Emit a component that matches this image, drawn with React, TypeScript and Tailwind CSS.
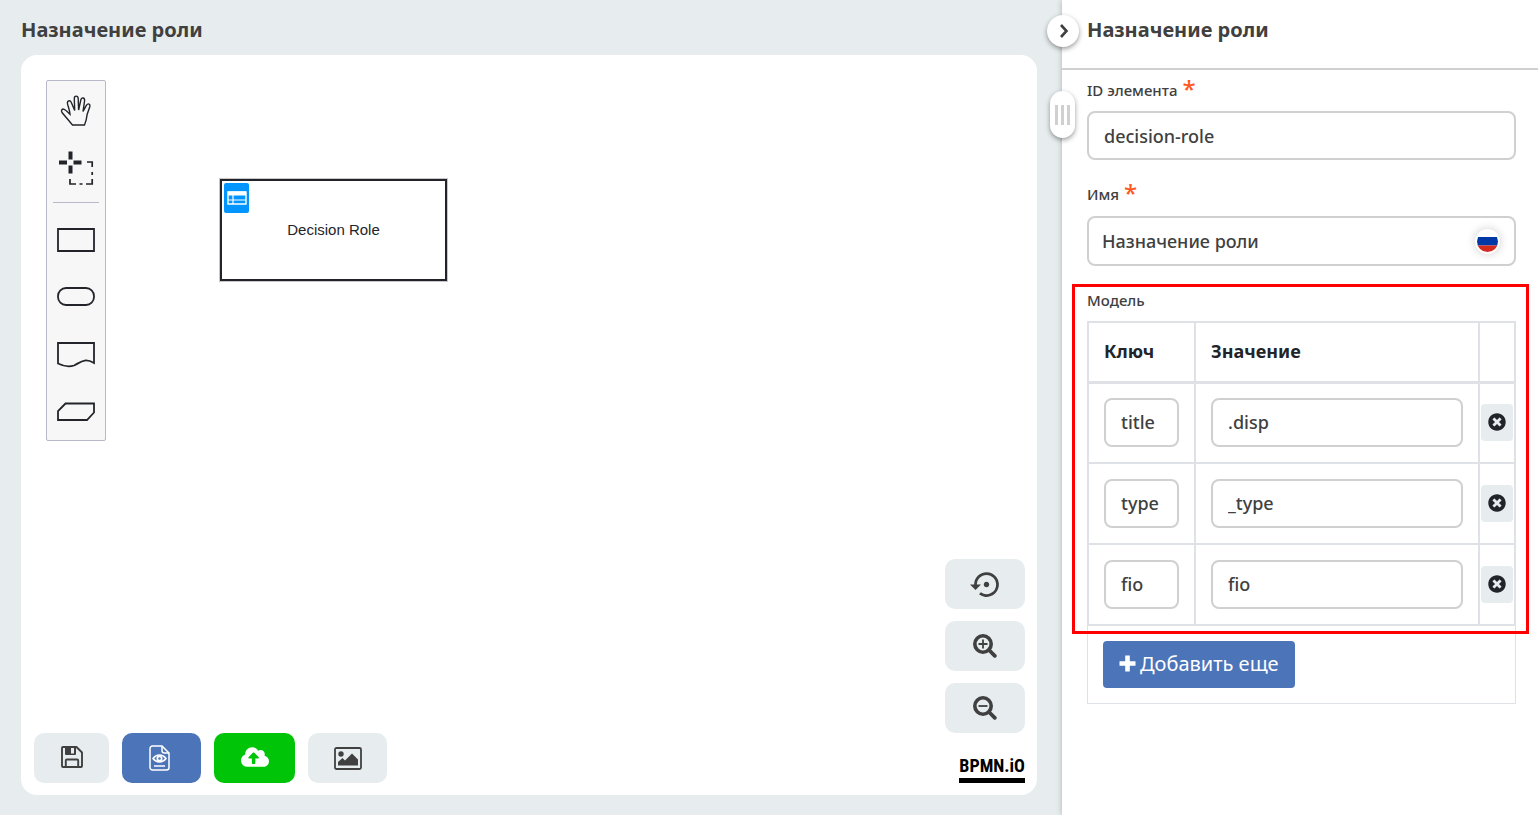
import { useState } from "react";
import type { ReactNode } from "react";
import { FaCloudUploadAlt, FaTimesCircle } from "react-icons/fa";
import { MdSettingsBackupRestore } from "react-icons/md";

const paletteTools: { label: string; icon: ReactNode }[] = [
  {
    label: "Рука",
    icon: (
      <path d="M15.500 34L5 21.500C3.700 19.300 5.200 17.400 7.200 18.300C9 19.200 11 21.200 13 23.200C12.700 19.500 11.300 16 10.500 12.800C9.900 9.500 13 8.700 14.200 11.200L17.700 19.500L17.300 7.500C17.300 4.300 21 4.300 21.200 7.500L21.600 19L23.800 9C24.400 6 27.800 6.600 27.600 9.600L26 20.500L29.500 14.200C31.100 11.800 33.600 13 32.800 15.700L30.200 23.200C29.700 27.500 28.800 31 27.500 34Z" strokeWidth="1.400" />
    ),
  },
  {
    label: "Выделение",
    icon: (
      <>
        <path d="M13.500 3.500v8M13.500 17.500v8M2 14.500h8M16.500 14.500h8" strokeWidth="4" />
        <path d="M30 14h5.200v5M35.200 24v3M35.200 31v5H29M25.500 36h-3M19 36h-6V31" strokeWidth="1.700" />
      </>
    ),
  },
];

const shapeTools: { label: string; path: string }[] = [
  { label: "Решение", path: "M1 9h36v22H1z" },
  { label: "Входные данные", path: "M9 11h20a8 8 0 0 1 8 8v1a8 8 0 0 1-8 8H9a8 8 0 0 1-8-8v-1a8 8 0 0 1 8-8z" },
  { label: "Источник знаний", path: "M1 9h36v20C27 23 23 29 17 31.500C11 33.500 6 32 1 29.500z" },
  { label: "Модель знаний", path: "M8.500 12.500H37v9L30 29H1v-9z" },
];

function PaletteButton({ label, children }: { label: string; children: ReactNode }) {
  return (
    <button type="button" aria-label={label} className="flex h-[57px] w-full items-center justify-center">
      <svg width="38" height="40" viewBox="0 0 38 40" fill="none" stroke="#22242a" strokeWidth="1.800">
        {children}
      </svg>
    </button>
  );
}

function ZoomIcon({ plus }: { plus?: boolean }) {
  return (
    <svg width="24" height="24" viewBox="0 0 24 24" fill="none" stroke="#404040">
      <circle cx="10" cy="10" r="8.200" strokeWidth="3.600" />
      <path d="M16 16l5.800 5.800" strokeWidth="3.800" strokeLinecap="round" />
      <path d={plus ? "M5.500 10h9M10 5.500v9" : "M5.500 10h9"} strokeWidth="1.800" />
    </svg>
  );
}

function SaveIcon() {
  return (
    <svg width="22" height="22" viewBox="0 0 22 22" fill="none" stroke="#404040" strokeWidth="1.900">
      <path d="M1 2a1 1 0 0 1 1-1h13.500L21 6.500V20a1 1 0 0 1-1 1H2a1 1 0 0 1-1-1z" />
      <path d="M4.800 21v-6.500a1 1 0 0 1 1-1h10.400a1 1 0 0 1 1 1V21" />
      <path d="M4 1h11v7a1 1 0 0 1-1 1H5a1 1 0 0 1-1-1z" fill="#404040" stroke="none" />
      <path d="M10 2h3v5.500h-3z" fill="#e7edef" stroke="none" />
    </svg>
  );
}

function PreviewIcon() {
  return (
    <svg width="21" height="26" viewBox="0 0 21 26" fill="none" stroke="#fff" strokeWidth="1.500">
      <path d="M13 1H3.500A2.500 2.500 0 0 0 1 3.500v19A2.500 2.500 0 0 0 3.500 25h14a2.500 2.500 0 0 0 2.500-2.500V8z" />
      <path d="M13 1v4.500A2.500 2.500 0 0 0 15.500 8H20" />
      <path d="M4 13.500c3.500-4.600 9.500-4.600 13 0c-3.500 4.600-9.500 4.600-13 0z" />
      <circle cx="10.500" cy="13.500" r="2.200" strokeWidth="1.700" />
      <path d="M5 21h11" />
    </svg>
  );
}

function PictureIcon() {
  return (
    <svg width="28" height="23" viewBox="0 0 28 23" fill="#404040">
      <rect x="1" y="1" width="26" height="21" rx="1.500" fill="none" stroke="#404040" strokeWidth="1.800" />
      <circle cx="7" cy="7" r="2.700" />
      <path d="M4 18.500v-3.500l4.500-4l2.500 2.500l7-7l6 6v6z" />
    </svg>
  );
}

function RequiredLabel({ htmlFor, children }: { htmlFor: string; children: ReactNode }) {
  return (
    <label htmlFor={htmlFor} className="flex h-6 items-center gap-[5px] text-[15px] font-medium text-[#404040]">
      {children}
      <span className="pb-0.5 text-2xl leading-6 font-medium text-[#ff5722]">*</span>
    </label>
  );
}

const fieldClass =
  "block h-[49px] w-full min-w-0 rounded-lg border-2 border-[#d0d0d0] bg-white px-[15px] text-lg font-medium text-[#404040] outline-none";

const initialRows = [
  { key: "title", value: ".disp" },
  { key: "type", value: "_type" },
  { key: "fio", value: "fio" },
];

export default function App() {
  const [rows, setRows] = useState(initialRows);
  const update = (index: number, patch: Partial<{ key: string; value: string }>) =>
    setRows(rows.map((row, i) => (i === index ? { ...row, ...patch } : row)));

  return (
    <div className="flex min-h-screen bg-[#e7edef] font-['Noto_Sans',sans-serif] text-[#404040]">
      <main className="flex min-w-0 flex-1 flex-col pr-[25px] pb-5 pl-[21px]">
        <h1 className="h-[55px] pt-4 text-xl font-bold">Назначение роли</h1>
        <section aria-label="Диаграмма" className="relative flex flex-1 flex-col justify-between gap-4 rounded-2xl bg-white pt-[25px] pr-3 pb-3 pl-[13px]">
          <div className="ml-3 w-[60px] rounded-xs border border-[#b8b9c8] bg-[#f7f7f7] py-px">
            {paletteTools.map((tool) => (
              <PaletteButton key={tool.label} label={tool.label}>
                {tool.icon}
              </PaletteButton>
            ))}
            <hr className="mx-1.5 mt-1.5 mb-2 border-[#b8b9c8]" />
            {shapeTools.map((tool) => (
              <PaletteButton key={tool.label} label={tool.label}>
                <path d={tool.path} />
              </PaletteButton>
            ))}
          </div>

          <div className="absolute top-[124px] left-[199px] flex h-[102px] w-[227px] items-center justify-center border-2 border-[#22242a] font-['Liberation_Sans',sans-serif] text-[15px] text-[#22242a] ring-1 ring-[#c8c8ca]">
            Decision Role
            <button type="button" aria-label="Открыть таблицу" className="absolute top-0.5 left-0.5 flex h-[30px] w-[25px] items-center justify-center rounded-xs bg-[#0095ff]">
              <svg width="20" height="14" viewBox="0 0 20 14" fill="none" stroke="#fff">
                <path d="M1 1h18v12H1z" strokeWidth="1.400" />
                <path d="M1 2.500h18" strokeWidth="4" />
                <path d="M1 9h18M6 4v9" strokeWidth="1.200" />
              </svg>
            </button>
          </div>

          <div className="flex items-end justify-between">
            <div className="flex gap-[13px]">
              <button type="button" aria-label="Сохранить" className="flex h-[50px] w-[75px] items-center justify-center rounded-[10px] bg-[#e7edef] pb-0.5">
                <SaveIcon />
              </button>
              <button type="button" aria-label="Просмотр" className="flex h-[50px] w-[79px] items-center justify-center rounded-[10px] bg-[#4c74b8] pr-1">
                <PreviewIcon />
              </button>
              <button type="button" aria-label="Опубликовать" className="flex h-[50px] w-[81px] items-center justify-center rounded-[10px] bg-[#00c407] pb-0.5 text-white">
                <FaCloudUploadAlt size={28} />
              </button>
              <button type="button" aria-label="Изображение" className="flex h-[50px] w-[79px] items-center justify-center rounded-[10px] bg-[#e7edef]">
                <PictureIcon />
              </button>
            </div>
            <div className="flex flex-col items-end gap-3">
              <button type="button" aria-label="Сбросить масштаб" className="flex h-[50px] w-20 items-center justify-center rounded-[10px] bg-[#e7edef] pl-0.5">
                <MdSettingsBackupRestore size={33} />
              </button>
              <button type="button" aria-label="Увеличить" className="flex h-[50px] w-20 items-center justify-center rounded-[10px] bg-[#e7edef]">
                <ZoomIcon plus />
              </button>
              <button type="button" aria-label="Уменьшить" className="flex h-[50px] w-20 items-center justify-center rounded-[10px] bg-[#e7edef]">
                <ZoomIcon />
              </button>
              <a
                href="https://bpmn.io"
                className="mt-2.5 flex h-7 items-end border-b-[5px] border-black font-['Roboto_Condensed','Open_Sans_Condensed','Liberation_Sans',sans-serif] text-lg leading-6 font-bold text-black"
              >
                BPMN.iO
              </a>
            </div>
          </div>
        </section>
      </main>

      <aside className="relative w-[476px] shrink-0 bg-white shadow-[0_0_6px_rgba(0,0,0,0.25)]">
        <button
          type="button"
          aria-label="Свернуть панель"
          className="absolute top-[15px] -left-[15px] flex size-8 items-center justify-center rounded-full bg-white pl-0.5 shadow-[0_2px_5px_rgba(0,0,0,0.4)]"
        >
          <svg width="14" height="16" viewBox="0 0 14 16" fill="none" stroke="#404040" strokeWidth="2.600">
            <path d="M4 2l5.500 6l-5.500 6" />
          </svg>
        </button>
        <button
          type="button"
          aria-label="Изменить ширину панели"
          className="absolute top-[91px] -left-3 flex h-[47px] w-[25px] items-center justify-center gap-[3px] rounded-full bg-white shadow-[0_2px_5px_rgba(0,0,0,0.4)]"
        >
          <span className="h-5 w-[3px] bg-[#d0d0d0]" />
          <span className="h-5 w-[3px] bg-[#d0d0d0]" />
          <span className="h-5 w-[3px] bg-[#d0d0d0]" />
        </button>

        <header className="flex h-[70px] items-start border-b-2 border-[#d0d0d0] pt-4 pl-[25px]">
          <h2 className="text-xl font-bold">Назначение роли</h2>
        </header>

        <div className="pt-2 pr-[22px] pl-[25px]">
          <RequiredLabel htmlFor="element-id">ID элемента</RequiredLabel>
          <input id="element-id" defaultValue="decision-role" className={`${fieldClass} mt-[9px]`} />

          <div className="mt-[22px]">
            <RequiredLabel htmlFor="element-name">Имя</RequiredLabel>
          </div>
          <div className="mt-2.5 flex h-[50px] items-center rounded-lg border-2 border-[#d0d0d0] pr-3.5 pl-[13px]">
            <input
              id="element-name"
              defaultValue="Назначение роли"
              className="min-w-0 flex-1 bg-transparent text-lg font-medium text-[#404040] outline-none"
            />
            <button type="button" aria-label="Русский" className="rounded-full bg-white p-0.5 shadow-[0_0_10px_rgba(0,0,0,0.2)]">
              <svg width="21" height="21" viewBox="0 0 21 21">
                <clipPath id="flag">
                  <circle cx="10.500" cy="10.500" r="10.500" />
                </clipPath>
                <g clipPath="url(#flag)">
                  <path d="M0 0h21v6H0z" fill="#fff" />
                  <path d="M0 6h21v8.500H0z" fill="#0039a6" />
                  <path d="M0 14.500h21V21H0z" fill="#d52b1e" />
                </g>
              </svg>
            </button>
          </div>

          <div className="relative mt-[22px]">
            <h3 className="h-[33px] text-[15px] leading-6 font-medium">Модель</h3>
            <table className="w-full table-fixed border-collapse border-2 border-[#dee2e6]">
              <colgroup>
                <col className="w-[107px]" />
                <col />
                <col className="w-9" />
              </colgroup>
              <thead>
                <tr className="h-[60px] text-left text-lg text-[#212529]">
                  <th className="border-2 border-b-3 border-[#dee2e6] px-[15px] pb-0.5 font-bold">Ключ</th>
                  <th className="border-2 border-b-3 border-[#dee2e6] px-[15px] pb-0.5 font-bold">Значение</th>
                  <th aria-label="Удалить" className="border-2 border-b-3 border-[#dee2e6]" />
                </tr>
              </thead>
              <tbody>
                {rows.map((row, index) => (
                  <tr key={index} className="h-[81px]">
                    <td className="border-2 border-[#dee2e6] px-[15px]">
                      <input aria-label="Ключ" value={row.key} onChange={(e) => update(index, { key: e.target.value })} className={`${fieldClass} pb-0.5`} />
                    </td>
                    <td className="border-2 border-[#dee2e6] px-[15px]">
                      <input aria-label="Значение" value={row.value} onChange={(e) => update(index, { value: e.target.value })} className={`${fieldClass} pb-0.5`} />
                    </td>
                    <td className="border-2 border-[#dee2e6] px-px">
                      <button
                        type="button"
                        aria-label="Удалить строку"
                        onClick={() => setRows(rows.filter((_, i) => i !== index))}
                        className="flex h-[37px] w-full items-center justify-center rounded-sm bg-[#e7edef] pb-0.5 text-[#212529]"
                      >
                        <FaTimesCircle size={18} />
                      </button>
                    </td>
                  </tr>
                ))}
              </tbody>
            </table>
            <div className="pointer-events-none absolute -top-1 -right-[13px] -bottom-2 -left-[15px] border-3 border-[#ff0000]" />
          </div>
          <div className="border border-t-0 border-[#dee2e6] p-[15px]">
            <button
              type="button"
              onClick={() => setRows([...rows, { key: "", value: "" }])}
              className="flex h-[47px] items-center gap-1 rounded-sm bg-[#4c74b8] px-4 pb-0.5 text-xl text-white"
            >
              <svg width="17" height="17" viewBox="0 0 17 17" fill="none" stroke="currentColor" strokeWidth="4.600" strokeLinejoin="round">
                <path d="M0.500 8.500h16M8.500 0.500v16" />
              </svg>
              Добавить еще
            </button>
          </div>
        </div>
      </aside>
    </div>
  );
}
